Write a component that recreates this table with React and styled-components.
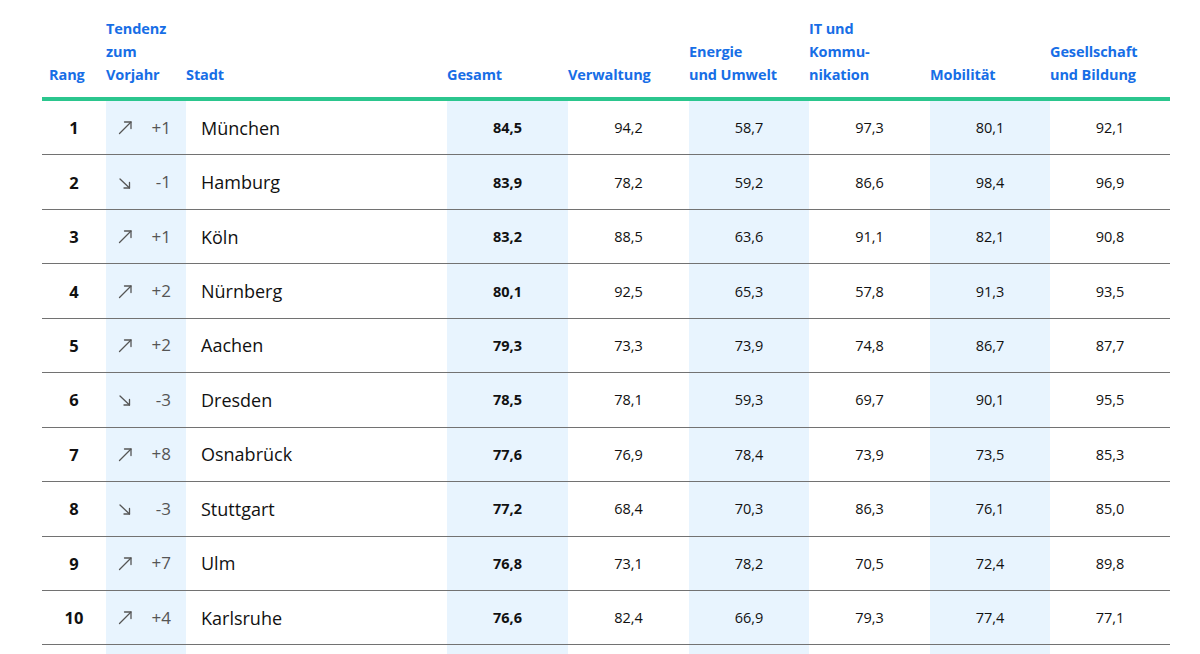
import React from "react";
import styled, { createGlobalStyle } from "styled-components";

const GlobalStyle = createGlobalStyle`
  html, body {
    margin: 0;
    padding: 0;
    background: #ffffff;
    height: 654px;
    overflow: hidden;
  }
  body {
    font-family: "Open Sans", "Noto Sans", sans-serif;
    color: #111;
  }
`;

const columns = "64px 80px 261px 121px 121px 120px 121px 120px 120px";
const shaded = "#e8f4fe";

const rows = [
  { rang: 1, up: true, delta: "+1", stadt: "München", values: ["84,5", "94,2", "58,7", "97,3", "80,1", "92,1"] },
  { rang: 2, up: false, delta: "-1", stadt: "Hamburg", values: ["83,9", "78,2", "59,2", "86,6", "98,4", "96,9"] },
  { rang: 3, up: true, delta: "+1", stadt: "Köln", values: ["83,2", "88,5", "63,6", "91,1", "82,1", "90,8"] },
  { rang: 4, up: true, delta: "+2", stadt: "Nürnberg", values: ["80,1", "92,5", "65,3", "57,8", "91,3", "93,5"] },
  { rang: 5, up: true, delta: "+2", stadt: "Aachen", values: ["79,3", "73,3", "73,9", "74,8", "86,7", "87,7"] },
  { rang: 6, up: false, delta: "-3", stadt: "Dresden", values: ["78,5", "78,1", "59,3", "69,7", "90,1", "95,5"] },
  { rang: 7, up: true, delta: "+8", stadt: "Osnabrück", values: ["77,6", "76,9", "78,4", "73,9", "73,5", "85,3"] },
  { rang: 8, up: false, delta: "-3", stadt: "Stuttgart", values: ["77,2", "68,4", "70,3", "86,3", "76,1", "85,0"] },
  { rang: 9, up: true, delta: "+7", stadt: "Ulm", values: ["76,8", "73,1", "78,2", "70,5", "72,4", "89,8"] },
  { rang: 10, up: true, delta: "+4", stadt: "Karlsruhe", values: ["76,6", "82,4", "66,9", "79,3", "77,4", "77,1"] },
];

function Arrow({ up }) {
  return (
    <svg width="15" height="15" viewBox="0 0 15 15" fill="none" stroke="#555" strokeWidth="1.3" strokeLinecap="round" strokeLinejoin="round">
      {up ? (
        <>
          <path d="M1.5 13.5 L13 2" />
          <path d="M6.5 2 H13 V8.5" />
        </>
      ) : (
        <>
          <path d="M2 4 L11.5 13" />
          <path d="M6 13 H11.5 V7.5" />
        </>
      )}
    </svg>
  );
}

export default function App() {
  return (
    <>
      <GlobalStyle />
      <Table>
        <HeadRow>
          <HeadCell $indent>Rang</HeadCell>
          <HeadCell>Tendenz<br />zum<br />Vorjahr</HeadCell>
          <HeadCell>Stadt</HeadCell>
          <HeadCell>Gesamt</HeadCell>
          <HeadCell>Verwaltung</HeadCell>
          <HeadCell>Energie<br />und Umwelt</HeadCell>
          <HeadCell>IT und<br />Kommu-<br />nikation</HeadCell>
          <HeadCell>Mobilität</HeadCell>
          <HeadCell>Gesellschaft<br />und Bildung</HeadCell>
        </HeadRow>
        {rows.map((r) => (
          <Row key={r.rang}>
            <RankCell>{r.rang}</RankCell>
            <TrendCell>
              <Arrow up={r.up} />
              <Delta>{r.delta}</Delta>
            </TrendCell>
            <CityCell>{r.stadt}</CityCell>
            {r.values.map((v, i) => (
              <ValueCell key={i} $shaded={i % 2 === 0} $bold={i === 0}>
                {v}
              </ValueCell>
            ))}
          </Row>
        ))}
        <FillerRow>
          <div />
          <TrendCell />
          <div />
          <ValueCell $shaded />
          <div />
          <ValueCell $shaded />
          <div />
          <ValueCell $shaded />
          <div />
        </FillerRow>
      </Table>
    </>
  );
}

const Table = styled.div`
  margin-left: 42px;
  width: 1128px;
`;

const HeadRow = styled.div`
  display: grid;
  grid-template-columns: ${columns};
  height: 97px;
  border-bottom: 4px solid #2bc68e;
  align-items: end;
`;

const HeadCell = styled.div`
  font-size: 14.5px;
  font-weight: 700;
  line-height: 23px;
  color: #176ee6;
  padding-bottom: 11px;
  padding-left: ${(p) => (p.$indent ? "7px" : "0")};
  white-space: nowrap;
  letter-spacing: -0.1px;
`;

const Row = styled.div`
  display: grid;
  grid-template-columns: ${columns};
  height: 54.45px;
  box-sizing: border-box;
  border-bottom: 1px solid #727272;
`;

const FillerRow = styled(Row)`
  border-bottom: none;
  height: 30px;
`;

const RankCell = styled.div`
  display: flex;
  align-items: center;
  justify-content: center;
  font-size: 16.5px;
  font-weight: 700;
  color: #111;
`;

const TrendCell = styled.div`
  display: flex;
  align-items: center;
  justify-content: space-between;
  background: ${shaded};
  padding: 0 15px 0 12px;
`;

const Delta = styled.span`
  font-size: 17px;
  color: #555;
  padding-bottom: 1px;
`;

const CityCell = styled.div`
  display: flex;
  align-items: center;
  padding-left: 15px;
  font-size: 18px;
  color: #111;
`;

const ValueCell = styled.div`
  display: flex;
  align-items: center;
  justify-content: center;
  background: ${(p) => (p.$shaded ? shaded : "transparent")};
  font-size: 14.5px;
  font-weight: ${(p) => (p.$bold ? 700 : 400)};
  color: #111;
`;
